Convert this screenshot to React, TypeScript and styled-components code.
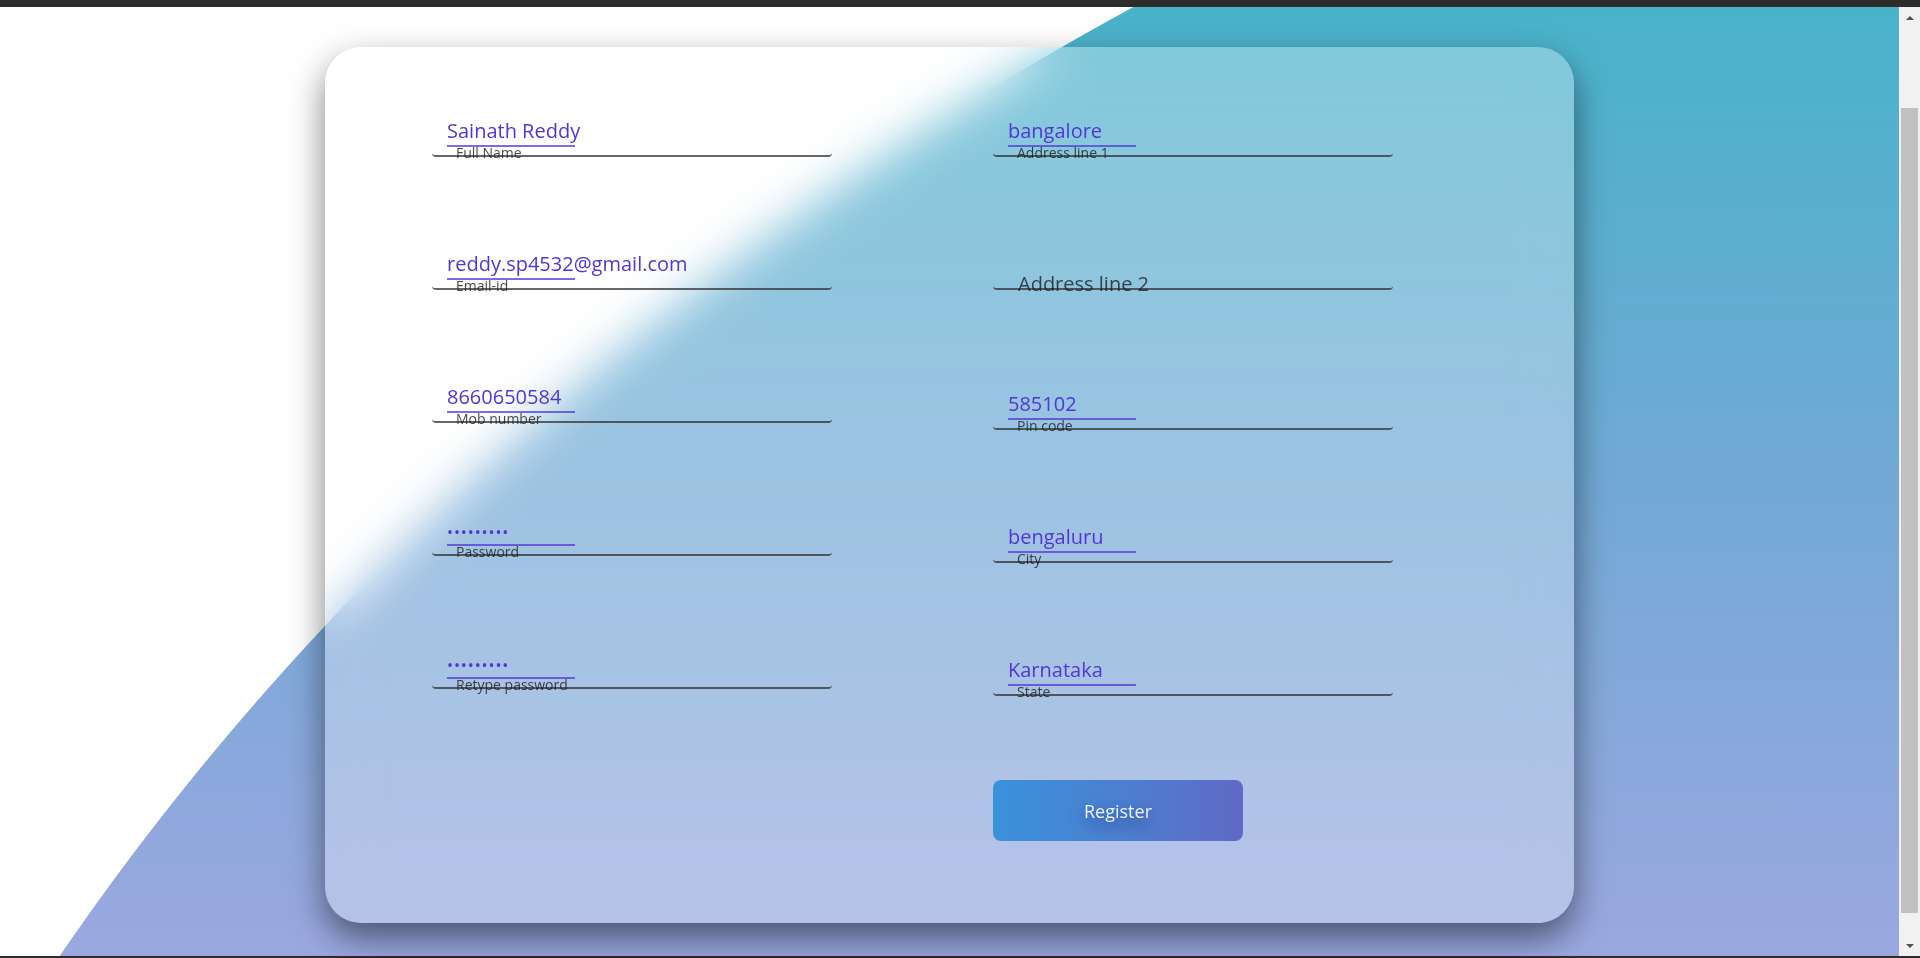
import React from "react";
import styled, { createGlobalStyle } from "styled-components";

const GlobalStyle = createGlobalStyle`
  html, body { margin: 0; padding: 0; overflow: hidden; }
  body { font-family: "Open Sans", "Noto Sans", sans-serif; }
  * { box-sizing: border-box; }
`;

const Screen = styled.div`
  width: 1920px;
  height: 958px;
  display: flex;
  flex-direction: column;
  background: #2b2b2b;
`;

const Bar = styled.div<{ $h: number }>`
  height: ${(p) => p.$h}px;
  flex: none;
  background: #2c2c2c;
`;

const Middle = styled.div`
  flex: 1;
  display: flex;
  min-height: 0;
`;

const Stage = styled.main`
  flex: 1;
  padding: 40px 0 0 325px;
  background:
    radial-gradient(ellipse 3369px 2755px at 3000px 2293px, transparent 3368px, #ffffff 3369px),
    linear-gradient(180deg, #49b3ca 0%, #72a9d5 50%, #9ba8e0 100%);
`;

const Card = styled.section`
  width: 1249px;
  height: 876px;
  border-radius: 36px;
  background: rgba(255, 255, 255, 0.3);
  backdrop-filter: blur(24px);
  box-shadow: 0 15px 35px rgba(0, 0, 0, 0.5);
  padding: 72px 0 0 107px;
  display: grid;
  grid-template-columns: 400px 400px;
  column-gap: 161px;
  align-items: start;
`;

const Column = styled.div`
  display: flex;
  flex-direction: column;
  gap: 95px;
  align-items: flex-start;
`;

const Field = styled.div<{ $after?: number }>`
  width: 400px;
  display: flex;
  flex-direction: column;
  align-items: flex-start;
  padding-left: 15px;
  border-bottom: 2px solid rgba(45, 45, 45, 0.72);
  border-radius: 0 0 4px 4px;
  margin-bottom: ${(p) => p.$after ?? 0}px;
`;

const Value = styled.div`
  font-size: 20px;
  line-height: 24px;
  height: 24px;
  color: #5236d4;
  white-space: nowrap;
`;

const Dots = styled(Value)`
  font-size: 16px;
  line-height: 19px;
  padding-top: 5px;
  letter-spacing: 0.9px;
`;

const Underline = styled.div`
  width: 128px;
  height: 2px;
  margin-top: 2px;
  background: rgba(84, 56, 214, 0.75);
`;

const Label = styled.label`
  font-size: 14px;
  line-height: 16px;
  margin: -2px 0 -6px 9px;
  color: rgba(25, 25, 25, 0.8);
  white-space: nowrap;
`;

const Placeholder = styled.label`
  font-size: 20px;
  line-height: 24px;
  margin: 20px 0 -8px 10px;
  color: rgba(25, 25, 25, 0.78);
  white-space: nowrap;
`;

const RegisterButton = styled.button`
  width: 250px;
  height: 61px;
  margin-top: -11px;
  border: none;
  border-radius: 8px;
  background: linear-gradient(90deg, #3a92db 0%, #4c80d0 50%, #6069c6 100%);
  color: #eef2ff;
  font-family: "Open Sans", "Noto Sans", sans-serif;
  font-size: 18px;
  text-shadow: 0 5px 14px rgba(30, 40, 110, 0.6);
  cursor: pointer;
`;

const Scrollbar = styled.aside`
  width: 21px;
  flex: none;
  background: #f1f1f1;
  display: flex;
  flex-direction: column;
`;

const Arrow = styled.div<{ $up?: boolean; $h: number }>`
  height: ${(p) => p.$h}px;
  flex: none;
  display: flex;
  align-items: center;
  justify-content: center;
  &::after {
    content: "";
    border-left: 4px solid transparent;
    border-right: 4px solid transparent;
    ${(p) =>
      p.$up ? "border-bottom: 4px solid #505050;" : "border-top: 4px solid #505050;"}
  }
`;

const Track = styled.div`
  flex: 1;
  display: flex;
  padding: 79px 2px 23px 2px;
`;

const Thumb = styled.div`
  flex: 1;
  background: #c1c1c1;
`;

type F = { value?: string; label: string; password?: boolean; after?: number };

const left: F[] = [
  { value: "Sainath Reddy", label: "Full Name" },
  { value: "reddy.sp4532@gmail.com", label: "Email-id" },
  { value: "8660650584", label: "Mob number" },
  { value: "•••••••••", label: "Password", password: true },
  { value: "•••••••••", label: "Retype password", password: true },
];

const right: F[] = [
  { value: "bangalore", label: "Address line 1" },
  { label: "Address line 2", after: 7 },
  { value: "585102", label: "Pin code" },
  { value: "bengaluru", label: "City" },
  { value: "Karnataka", label: "State" },
];

function FormField({ f }: { f: F }) {
  if (!f.value) {
    return (
      <Field $after={f.after}>
        <Placeholder>{f.label}</Placeholder>
      </Field>
    );
  }
  return (
    <Field $after={f.after}>
      {f.password ? <Dots>{f.value}</Dots> : <Value>{f.value}</Value>}
      <Underline />
      <Label>{f.label}</Label>
    </Field>
  );
}

export default function App() {
  return (
    <Screen>
      <GlobalStyle />
      <Bar $h={7} />
      <Middle>
        <Stage>
          <Card>
            <Column>
              {left.map((f) => (
                <FormField key={f.label} f={f} />
              ))}
            </Column>
            <Column>
              {right.map((f) => (
                <FormField key={f.label} f={f} />
              ))}
              <RegisterButton>Register</RegisterButton>
            </Column>
          </Card>
        </Stage>
        <Scrollbar>
          <Arrow $up $h={22} />
          <Track>
            <Thumb />
          </Track>
          <Arrow $h={20} />
        </Scrollbar>
      </Middle>
      <Bar $h={2} />
    </Screen>
  );
}
